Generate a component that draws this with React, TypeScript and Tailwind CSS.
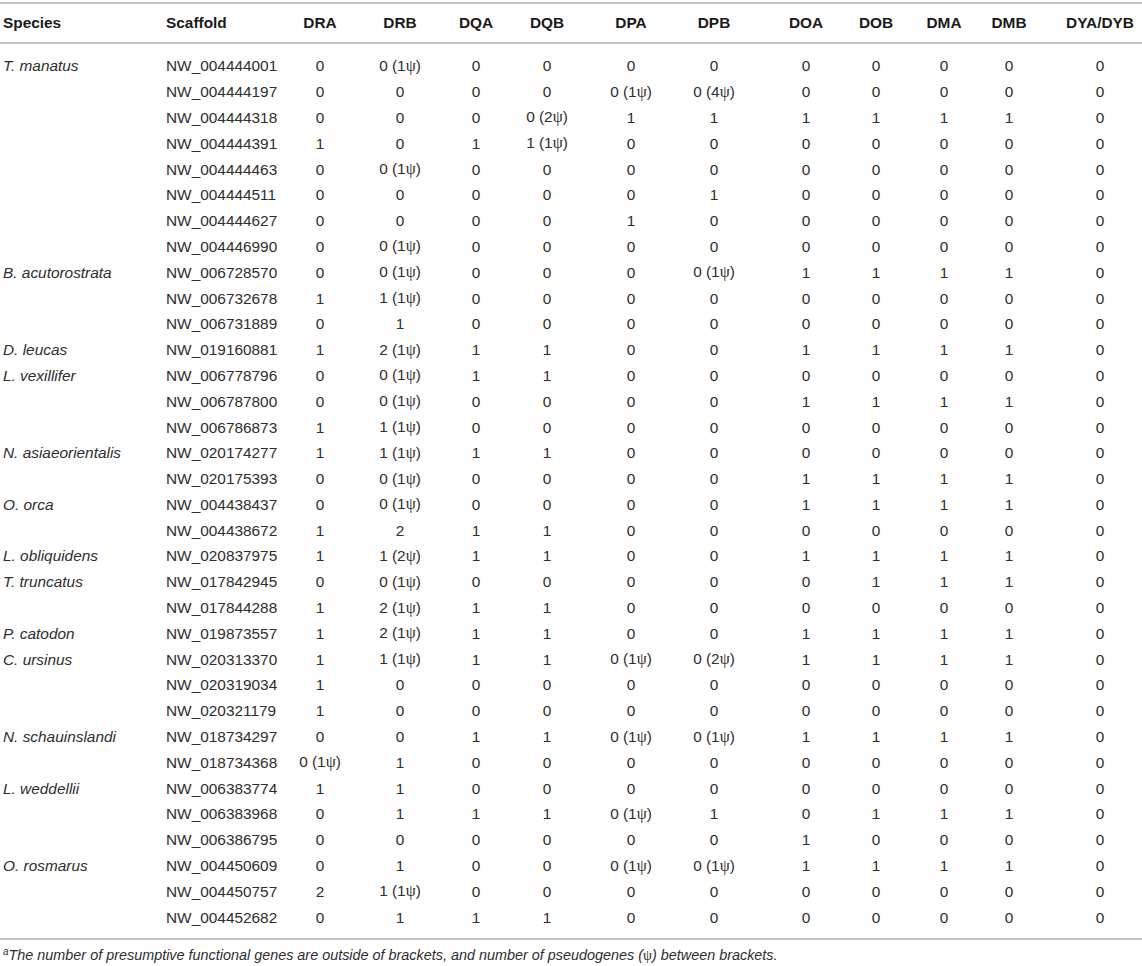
const head = ["DRA", "DRB", "DQA", "DQB", "DPA", "DPB", "DOA", "DOB", "DMA", "DMB", "DYA/DYB"];

// per-column nudges so the centred values sit where they do in the figure
const shift = ["", "", "", "pr-[8px]", "", "pr-[4px]", "pl-[10px]", "", "", "pr-[10px]", "pl-[8px]"];

type Row = [string, string, string[]];

const rows: Row[] = [
  ["T. manatus", "NW_004444001", ["0", "0 (1ψ)", "0", "0", "0", "0", "0", "0", "0", "0", "0"]],
  ["", "NW_004444197", ["0", "0", "0", "0", "0 (1ψ)", "0 (4ψ)", "0", "0", "0", "0", "0"]],
  ["", "NW_004444318", ["0", "0", "0", "0 (2ψ)", "1", "1", "1", "1", "1", "1", "0"]],
  ["", "NW_004444391", ["1", "0", "1", "1 (1ψ)", "0", "0", "0", "0", "0", "0", "0"]],
  ["", "NW_004444463", ["0", "0 (1ψ)", "0", "0", "0", "0", "0", "0", "0", "0", "0"]],
  ["", "NW_004444511", ["0", "0", "0", "0", "0", "1", "0", "0", "0", "0", "0"]],
  ["", "NW_004444627", ["0", "0", "0", "0", "1", "0", "0", "0", "0", "0", "0"]],
  ["", "NW_004446990", ["0", "0 (1ψ)", "0", "0", "0", "0", "0", "0", "0", "0", "0"]],
  ["B. acutorostrata", "NW_006728570", ["0", "0 (1ψ)", "0", "0", "0", "0 (1ψ)", "1", "1", "1", "1", "0"]],
  ["", "NW_006732678", ["1", "1 (1ψ)", "0", "0", "0", "0", "0", "0", "0", "0", "0"]],
  ["", "NW_006731889", ["0", "1", "0", "0", "0", "0", "0", "0", "0", "0", "0"]],
  ["D. leucas", "NW_019160881", ["1", "2 (1ψ)", "1", "1", "0", "0", "1", "1", "1", "1", "0"]],
  ["L. vexillifer", "NW_006778796", ["0", "0 (1ψ)", "1", "1", "0", "0", "0", "0", "0", "0", "0"]],
  ["", "NW_006787800", ["0", "0 (1ψ)", "0", "0", "0", "0", "1", "1", "1", "1", "0"]],
  ["", "NW_006786873", ["1", "1 (1ψ)", "0", "0", "0", "0", "0", "0", "0", "0", "0"]],
  ["N. asiaeorientalis", "NW_020174277", ["1", "1 (1ψ)", "1", "1", "0", "0", "0", "0", "0", "0", "0"]],
  ["", "NW_020175393", ["0", "0 (1ψ)", "0", "0", "0", "0", "1", "1", "1", "1", "0"]],
  ["O. orca", "NW_004438437", ["0", "0 (1ψ)", "0", "0", "0", "0", "1", "1", "1", "1", "0"]],
  ["", "NW_004438672", ["1", "2", "1", "1", "0", "0", "0", "0", "0", "0", "0"]],
  ["L. obliquidens", "NW_020837975", ["1", "1 (2ψ)", "1", "1", "0", "0", "1", "1", "1", "1", "0"]],
  ["T. truncatus", "NW_017842945", ["0", "0 (1ψ)", "0", "0", "0", "0", "0", "1", "1", "1", "0"]],
  ["", "NW_017844288", ["1", "2 (1ψ)", "1", "1", "0", "0", "0", "0", "0", "0", "0"]],
  ["P. catodon", "NW_019873557", ["1", "2 (1ψ)", "1", "1", "0", "0", "1", "1", "1", "1", "0"]],
  ["C. ursinus", "NW_020313370", ["1", "1 (1ψ)", "1", "1", "0 (1ψ)", "0 (2ψ)", "1", "1", "1", "1", "0"]],
  ["", "NW_020319034", ["1", "0", "0", "0", "0", "0", "0", "0", "0", "0", "0"]],
  ["", "NW_020321179", ["1", "0", "0", "0", "0", "0", "0", "0", "0", "0", "0"]],
  ["N. schauinslandi", "NW_018734297", ["0", "0", "1", "1", "0 (1ψ)", "0 (1ψ)", "1", "1", "1", "1", "0"]],
  ["", "NW_018734368", ["0 (1ψ)", "1", "0", "0", "0", "0", "0", "0", "0", "0", "0"]],
  ["L. weddellii", "NW_006383774", ["1", "1", "0", "0", "0", "0", "0", "0", "0", "0", "0"]],
  ["", "NW_006383968", ["0", "1", "1", "1", "0 (1ψ)", "1", "0", "1", "1", "1", "0"]],
  ["", "NW_006386795", ["0", "0", "0", "0", "0", "0", "1", "0", "0", "0", "0"]],
  ["O. rosmarus", "NW_004450609", ["0", "1", "0", "0", "0 (1ψ)", "0 (1ψ)", "1", "1", "1", "1", "0"]],
  ["", "NW_004450757", ["2", "1 (1ψ)", "0", "0", "0", "0", "0", "0", "0", "0", "0"]],
  ["", "NW_004452682", ["0", "1", "1", "1", "0", "0", "0", "0", "0", "0", "0"]],
];

const grid =
  "grid grid-cols-[163px_117px_80px_80px_72px_78px_82px_88px_82px_68px_68px_72px_92px] items-center";

// the psi in the figure is set in a serif face
function Value({ v }: { v: string }) {
  if (!v.includes("ψ")) return <>{v}</>;
  const [a, b] = v.split("ψ");
  return (
    <>
      {a}
      <span className="font-['Liberation_Serif',serif] text-[16px]">ψ</span>
      {b}
    </>
  );
}

export default function App() {
  return (
    <div className="w-[1142px] bg-white pt-[2px] font-['Liberation_Sans',Arial,sans-serif] text-[15.4px] text-[#2e2e2e]">
      <div className={`${grid} h-[42px] border-y-2 border-[#c3c3c3] font-bold text-[#1a1a1a]`}>
        <div className="pl-[3px]">Species</div>
        <div className="pl-[3px]">Scaffold</div>
        {head.map((h, i) => (
          <div key={h} className={`text-center ${shift[i]}`}>
            {h}
          </div>
        ))}
      </div>

      <div className="pt-[9px] pb-[8px]">
        {rows.map(([sp, sc, vals]) => (
          <div key={sc} className={`${grid} h-[25.8px]`}>
            <div className="pl-[3px] italic">{sp}</div>
            <div className="pl-[3px]">{sc}</div>
            {vals.map((v, i) => (
              <div key={i} className={`text-center whitespace-nowrap ${shift[i]}`}>
                <Value v={v} />
              </div>
            ))}
          </div>
        ))}
      </div>

      <div className="border-t-2 border-[#c3c3c3] pt-[5px] pl-[3px] text-[14.4px] italic">
        <sup className="text-[10px]">a</sup>
        The number of presumptive functional genes are outside of brackets, and number of pseudogenes (
        <span className="font-['Liberation_Serif',serif] not-italic">ψ</span>) between brackets.
      </div>
    </div>
  );
}
